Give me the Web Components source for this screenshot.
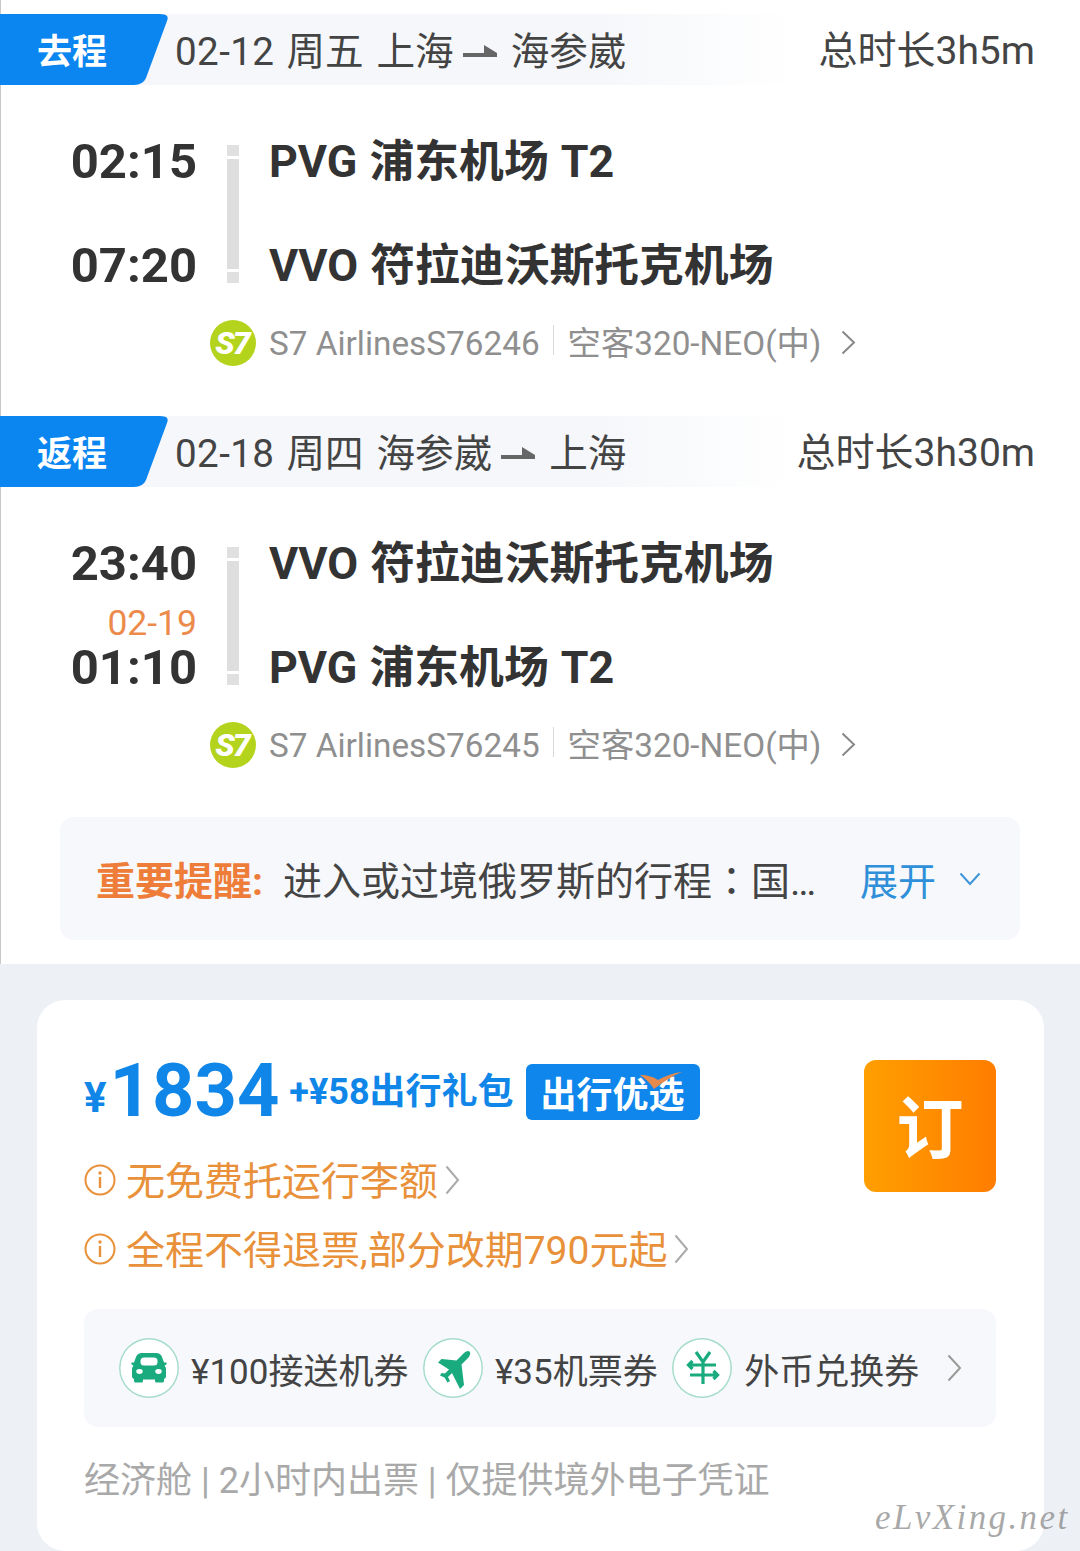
<!DOCTYPE html>
<html lang="zh">
<head>
<meta charset="utf-8">
<title>机票详情</title>
<style>
html, body {
    margin: 0;
    padding: 0;
    background: #fff;
}
body {
    width: 1080px;
    height: 1551px;
    overflow: hidden;
    font-family: Roboto, "Noto Sans CJK SC", sans-serif;
    color: #444;
}
</style>
</head>
<body>

<trip-page>
    <flight-segment slot="segments">
        <flight-header label="去程">
            <route-title date="02-12" day="周五" from="上海" to="海参崴"></route-title>
            <span slot="total">总时长3h5m</span>
        </flight-header>
        <flight-route>
            <span slot="dep-time">02:15</span>
            <span slot="dep-place">PVG 浦东机场 T2</span>
            <span slot="arr-time">07:20</span>
            <span slot="arr-place">VVO 符拉迪沃斯托克机场</span>
        </flight-route>
        <airline-row>
            <span slot="flight">S7 AirlinesS76246</span>
            <span slot="plane">空客320-NEO(中)</span>
        </airline-row>
    </flight-segment>
    <flight-segment slot="segments">
        <flight-header label="返程">
            <route-title date="02-18" day="周四" from="海参崴" to="上海"></route-title>
            <span slot="total">总时长3h30m</span>
        </flight-header>
        <flight-route>
            <span slot="dep-time">23:40</span>
            <span slot="dep-place">VVO 符拉迪沃斯托克机场</span>
            <span slot="next-day">02-19</span>
            <span slot="arr-time">01:10</span>
            <span slot="arr-place">PVG 浦东机场 T2</span>
        </flight-route>
        <airline-row>
            <span slot="flight">S7 AirlinesS76245</span>
            <span slot="plane">空客320-NEO(中)</span>
        </airline-row>
    </flight-segment>
    <notice-box slot="notice">
        <span slot="title">重要提醒:</span>
        进入或过境俄罗斯的行程<span lang="zh-Hant" style="font-family: 'Noto Sans CJK TC', sans-serif">：</span>国…
    </notice-box>
    <price-card slot="card">
        <warn-line>无免费托运行李额</warn-line>
        <warn-line>全程不得退票,部分改期790元起</warn-line>
        <perk-bar slot="perks">
            <perk-item icon="car">¥100接送机券</perk-item>
            <perk-item icon="plane">¥35机票券</perk-item>
            <perk-item icon="yen">外币兑换券</perk-item>
        </perk-bar>
        <span slot="foot">经济舱 | 2小时内出票 | 仅提供境外电子凭证</span>
    </price-card>
</trip-page>

<script>
const CHEVRON = (w, h, color) => `<svg width="${w}" height="${h}" viewBox="0 0 ${w} ${h}" fill="none"><path d="M1.5 1.5 L${w - 2} ${h / 2} L1.5 ${h - 1.5}" stroke="${color}" stroke-width="2"/></svg>`;

customElements.define('trip-page', class TripPage extends HTMLElement {
    constructor() {
        super();
        this.attachShadow({ mode: 'open' }).innerHTML = `
<style>
:host { display: block; width: 1080px; height: 1551px; position: relative; overflow: hidden; }
.top { height: 950px; padding-top: 14px; border-left: 1px solid #c9c9c9; }
.bottom { height: 551px; padding: 36px 36px 0 37px; background: #edf0f5; }
.mark {
    position: absolute; left: 875px; top: 1496px;
    font: italic 400 35px/44px "Liberation Serif", serif;
    letter-spacing: 2.4px; color: rgba(110, 110, 110, .6);
}
</style>
<div class="top">
    <slot name="segments"></slot>
    <slot name="notice"></slot>
</div>
<div class="bottom"><slot name="card"></slot></div>
<div class="mark">eLvXing.net</div>`;
    }
});

customElements.define('flight-segment', class FlightSegment extends HTMLElement {
    constructor() {
        super();
        this.attachShadow({ mode: 'open' }).innerHTML = `
<style>
:host { display: block; height: 402px; margin-left: -1px; }
</style>
<slot></slot>`;
    }
});

customElements.define('flight-header', class FlightHeader extends HTMLElement {
    constructor() {
        super();
        this.attachShadow({ mode: 'open' }).innerHTML = `
<style>
:host {
    display: flex; align-items: center; height: 71px; padding-right: 45px;
    background: linear-gradient(90deg, #f5f7fa 0, #f5f7fa 55%, #fff 74%);
    font-size: 38px; color: #444;
}
.tag {
    width: 168px; height: 71px; flex: none; box-sizing: border-box; padding: 0 0 2px 37px;
    display: flex; align-items: center;
    background: #0b85ef; color: #fff; font-size: 35px; font-weight: 700;
    clip-path: path('M0 0H160Q170 0 167 7L146 64Q143 71 134 71H0Z');
}
.route { flex: 1; padding-left: 7px; margin-top: -3px; }
.total { font-size: 39px; margin-top: -5px; }
</style>
<div class="tag"></div>
<div class="route"><slot></slot></div>
<div class="total"><slot name="total"></slot></div>`;
        this.shadowRoot.querySelector('.tag').textContent = this.getAttribute('label');
    }
});

customElements.define('route-title', class RouteTitle extends HTMLElement {
    constructor() {
        super();
        this.attachShadow({ mode: 'open' }).innerHTML = `
<style>
:host { display: flex; align-items: baseline; gap: 11px; font-size: 38.6px; }
.date { letter-spacing: .4px; margin-right: 1px; }
.day { margin-right: 2px; }
svg { flex: none; align-self: center; margin: 7px 3px 0 -2px; }
</style>
<span class="date"></span>
<span class="day"></span>
<span class="from"></span>
<svg width="34" height="14" viewBox="0 0 34 14"><path d="M0 8H21L21 0L34 8V12H0Z" fill="#666"/></svg>
<span class="to"></span>`;
        for (const k of ['date', 'day', 'from', 'to']) {
            this.shadowRoot.querySelector('.' + k).textContent = this.getAttribute(k);
        }
    }
});

customElements.define('flight-route', class FlightRoute extends HTMLElement {
    constructor() {
        super();
        this.attachShadow({ mode: 'open' }).innerHTML = `
<style>
:host {
    display: grid; margin-top: 1px; padding-left: 71px;
    grid-template-columns: 126px 12px 1fr; grid-template-rows: 104px 104px;
    column-gap: 30px; color: #333;
}
.time {
    display: flex; flex-direction: column; justify-content: flex-end; align-items: flex-end;
    font-size: 49px; font-weight: 700; line-height: 56px;
}
.time ::slotted(*) { display: block; }
.place { font-size: 44.8px; font-weight: 700; line-height: 56px; align-self: end; word-spacing: 1px; }
.rail {
    grid-column: 2; grid-row: 1 / 3; display: flex; flex-direction: column; gap: 3px;
    padding: 59px 0 11px; box-sizing: border-box;
}
.rail i { display: block; height: 11px; background: #e0e0e0; }
.rail b { display: block; flex: 1; background: #dedede; }
.note { font-size: 35.5px; font-weight: 400; line-height: 34px; color: #ec8a4c; }
</style>
<div class="time" style="grid-column:1;grid-row:1"><slot name="dep-time"></slot></div>
<div class="rail"><i></i><b></b><i></i></div>
<div class="place" style="grid-column:3;grid-row:1"><slot name="dep-place"></slot></div>
<div class="time" style="grid-column:1;grid-row:2"><div class="note"><slot name="next-day"></slot></div><slot name="arr-time"></slot></div>
<div class="place" style="grid-column:3;grid-row:2"><slot name="arr-place"></slot></div>`;
    }
});

customElements.define('airline-row', class AirlineRow extends HTMLElement {
    constructor() {
        super();
        this.attachShadow({ mode: 'open' }).innerHTML = `
<style>
:host {
    display: flex; align-items: center; height: 46px; margin-top: 26px; padding-left: 210px;
    font-size: 33.3px; color: #8f8f8f;
}
.logo {
    width: 46px; height: 46px; flex: none; border-radius: 50%; margin-right: 13px;
    background: #b4d31c; color: #fff; display: flex; align-items: center; justify-content: center;
    font-size: 32px; font-style: italic; font-weight: 900; letter-spacing: -2px; padding-right: 2px; box-sizing: border-box;
}
.txt { display: flex; align-items: baseline; margin-top: -6px; }
.sep { width: 1px; height: 30px; align-self: center; background: #d8d8d8; margin: 0 14px 0 13px; }
svg { margin-left: 20px; margin-top: -2px; }
</style>
<span class="logo">S7</span>
<span class="txt">
    <slot name="flight"></slot>
    <span class="sep"></span>
    <slot name="plane"></slot>
</span>
${CHEVRON(15, 25, '#888')}`;
    }
});

customElements.define('notice-box', class NoticeBox extends HTMLElement {
    constructor() {
        super();
        this.attachShadow({ mode: 'open' }).innerHTML = `
<style>
:host {
    display: flex; align-items: center; box-sizing: border-box; width: 960px; height: 123px;
    margin: -1px 0 0 59px; padding: 0 39px 0 36px; border-radius: 14px;
    background: #f6f8fb; font-size: 39px; color: #444;
}
.title { color: #ef7d3a; font-weight: 700; font-size: 39px; margin-right: 20px; white-space: nowrap; margin-top: -2px; }
.text { flex: 1; white-space: nowrap; margin-top: -2px; }
.more { color: #2f8fd8; font-size: 38px; margin-right: 23px; }
</style>
<span class="title"><slot name="title"></slot></span>
<span class="text"><slot></slot></span>
<span class="more">展开</span>
<svg width="22" height="14" viewBox="0 0 22 14" fill="none"><path d="M1.5 1.5 L11 12 L20.5 1.5" stroke="#3b95d8" stroke-width="2"/></svg>`;
    }
});

customElements.define('price-card', class PriceCard extends HTMLElement {
    constructor() {
        super();
        this.attachShadow({ mode: 'open' }).innerHTML = `
<style>
:host {
    display: block; box-sizing: border-box; width: 1007px; height: 551px;
    padding: 60px 48px 0 47px; border-radius: 28px; background: #fff;
}
.head { display: flex; justify-content: space-between; align-items: flex-start; height: 249px; }
.price { display: flex; align-items: center; height: 60px; color: #0f86e8; font-weight: 700; }
.yen { font-size: 42px; margin: 14px 3px 0 0; }
.num { font-size: 74px; line-height: 60px; margin-top: 1px; }
.gift { font-size: 36px; margin: -5px 12px 0 10px; white-space: nowrap; }
.chip {
    position: relative; width: 174px; height: 56px; border-radius: 6px; background: #0f86ec; margin-top: 4px;
    color: #fff; font-size: 36px; font-weight: 700; display: flex; align-items: center; justify-content: center;
}
.chip svg { position: absolute; left: 113px; top: 7px; }
.buy {
    width: 132px; height: 132px; flex: none; border-radius: 12px; box-sizing: border-box; padding-bottom: 6px;
    background: linear-gradient(90deg, #ff9f00, #ff7d00); color: #fff;
    font-size: 67px; font-weight: 700; display: flex; align-items: center; justify-content: center;
}
.warns { display: flex; flex-direction: column; gap: 19px; margin-top: 35px; }
.foot { margin-top: 33px; font-size: 36px; line-height: 42px; color: #a9a9a9; white-space: nowrap; }
</style>
<div class="head">
    <div>
        <div class="price">
            <span class="yen">¥</span><span class="num">1834</span>
            <span class="gift">+¥58出行礼包</span>
            <span class="chip">出行优选
                <svg width="44" height="20" viewBox="0 0 44 20"><path d="M1 4C8 4 15 6 19 9C26 5 34 2 43 1C33 5 24 11 15 18C11 12 7 8 1 4Z" fill="#e58a4c"/></svg>
            </span>
        </div>
        <div class="warns"><slot></slot></div>
    </div>
    <div class="buy">订</div>
</div>
<slot name="perks"></slot>
<div class="foot"><slot name="foot"></slot></div>`;
    }
});

customElements.define('warn-line', class WarnLine extends HTMLElement {
    constructor() {
        super();
        this.attachShadow({ mode: 'open' }).innerHTML = `
<style>
:host { display: flex; align-items: center; height: 50px; font-size: 39px; color: #e8913a; white-space: nowrap; }
.info { flex: none; margin-right: 10px; }
.txt { margin-top: -4px; }
.chev { flex: none; margin: 4px 0 0 7px; }
</style>
<svg class="info" width="32" height="32" viewBox="0 0 32 32" fill="none">
    <circle cx="16" cy="16" r="14.5" stroke="#e8913a" stroke-width="2"/>
    <path d="M16 13V24" stroke="#e8913a" stroke-width="2.4"/>
    <circle cx="16" cy="9" r="1.7" fill="#e8913a"/>
</svg>
<span class="txt"><slot></slot></span>
<span class="chev">${CHEVRON(15, 30, '#aaa')}</span>`;
    }
});

customElements.define('perk-bar', class PerkBar extends HTMLElement {
    constructor() {
        super();
        this.attachShadow({ mode: 'open' }).innerHTML = `
<style>
:host {
    display: flex; align-items: center; gap: 14.5px; box-sizing: border-box; height: 118px;
    padding: 0 34px 0 35px; border-radius: 14px; background: #f6f8fb;
}
svg { margin-left: auto; }
</style>
<slot></slot>
${CHEVRON(15, 28, '#999')}`;
    }
});

const PERK_ICONS = {
    car: `<path fill="#19ab7e" d="M23 15H37C40 15 42 16.500 43 19L45 24.500H47C48 24.500 48 26.500 46.500 27L45.500 27.500C46.500 28.700 47 30 47 31.500V38C47 39.500 46.300 40.500 45 41V43C45 44 44 44.500 43 44.500H38C37 44.500 36 44 36 43V41.500H24V43C24 44 23 44.500 22 44.500H17C16 44.500 15 44 15 43V41C13.700 40.500 13 39.500 13 38V31.500C13 30 13.500 28.700 14.500 27.500L13.500 27C12 26.500 12 24.500 13 24.500H15L17 19C18 16.500 20 15 23 15Z"/>
<rect x="21.500" y="19.500" width="17" height="8" rx="3.500" fill="#fff"/>
<ellipse cx="20.500" cy="33.500" rx="3.200" ry="2.400" fill="#fff"/>
<ellipse cx="39.500" cy="33.500" rx="3.200" ry="2.400" fill="#fff"/>`,
    plane: `<path fill="#19ab7e" d="M46.500 13.500C48 15 47 18 45 20L38.500 26.500L41 47L37 51L29 35L25 39L27 43L24.500 44.500L21.500 39.500L17 37.500L18.500 35L22 35.500L26 31.500L15 24.500L18.500 21L33.500 22.500L40.500 15.500C42.500 13.500 45 12 46.500 13.500Z"/>`,
    yen: `<path fill="none" stroke="#19ab7e" stroke-width="3.200" d="M24 14L31 24L38 14M31 24V46M16.500 27H44M20.500 23L16.500 27L20.500 31M18 37H45.500M41.500 33L45.500 37L41.500 41"/>`
};

customElements.define('perk-item', class PerkItem extends HTMLElement {
    constructor() {
        super();
        const icon = PERK_ICONS[this.getAttribute('icon')];
        this.attachShadow({ mode: 'open' }).innerHTML = `
<style>
:host { display: flex; align-items: center; gap: 12px; font-size: 35px; color: #444; white-space: nowrap; }
.ring {
    width: 60px; height: 60px; flex: none; border-radius: 50%;
    box-shadow: inset 0 0 0 1.5px #a6dccb; background: #fff; display: block;
}
svg { display: block; }
</style>
<span class="ring"><svg width="60" height="60" viewBox="0 0 60 60">${icon}</svg></span>
<slot></slot>`;
    }
});
</script>
</body>
</html>
